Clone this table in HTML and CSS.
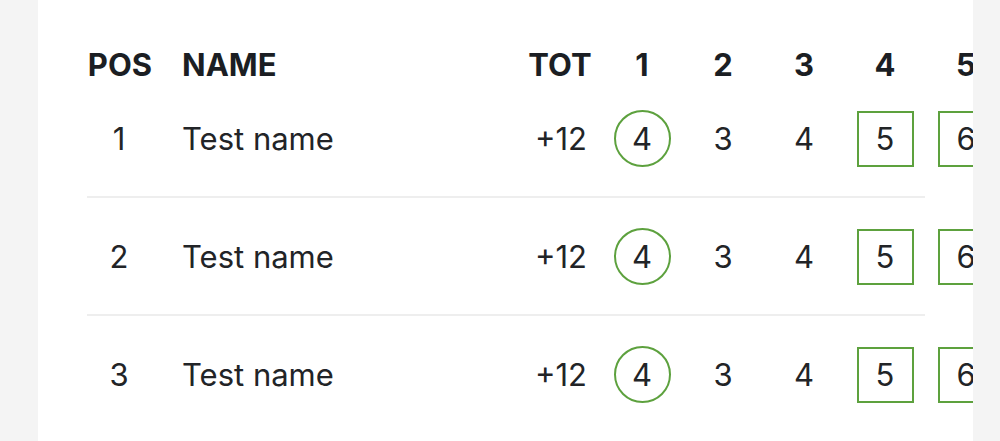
FILE: index.html
```html
<!DOCTYPE html>
<html>
<head>
<meta charset="utf-8">
<link rel="stylesheet" href="styles.css">
</head>
<body>
<div class="page">
  <div class="card">
    <div class="board">
      <div class="row head">
        <div class="c pos">POS</div>
        <div class="c name">NAME</div>
        <div class="c tot">TOT</div>
        <div class="c hole">1</div>
        <div class="c hole">2</div>
        <div class="c hole">3</div>
        <div class="c hole">4</div>
        <div class="c hole">5</div>
      </div>
      <div class="row player">
        <div class="c pos">1</div>
        <div class="c name">Test name</div>
        <div class="c tot">+12</div>
        <div class="c hole"><span class="score birdie">4</span></div>
        <div class="c hole"><span class="score">3</span></div>
        <div class="c hole"><span class="score">4</span></div>
        <div class="c hole"><span class="score bogey">5</span></div>
        <div class="c hole"><span class="score bogey">6</span></div>
      </div>
      <div class="row player">
        <div class="c pos">2</div>
        <div class="c name">Test name</div>
        <div class="c tot">+12</div>
        <div class="c hole"><span class="score birdie">4</span></div>
        <div class="c hole"><span class="score">3</span></div>
        <div class="c hole"><span class="score">4</span></div>
        <div class="c hole"><span class="score bogey">5</span></div>
        <div class="c hole"><span class="score bogey">6</span></div>
      </div>
      <div class="row player last">
        <div class="c pos">3</div>
        <div class="c name">Test name</div>
        <div class="c tot">+12</div>
        <div class="c hole"><span class="score birdie">4</span></div>
        <div class="c hole"><span class="score">3</span></div>
        <div class="c hole"><span class="score">4</span></div>
        <div class="c hole"><span class="score bogey">5</span></div>
        <div class="c hole"><span class="score bogey">6</span></div>
      </div>
    </div>
  </div>
</div>
</body>
</html>
```
FILE: styles.css
```css
html, body {
  margin: 0;
  padding: 0;
  background: #f4f4f4;
  height: 100%;
}
.page {
  display: flex;
  height: 441px;
}
.card {
  margin-left: 38px;
  width: 935px;
  height: 441px;
  background: #ffffff;
  overflow: hidden;
  font-family: Inter, "Noto Sans", sans-serif;
  color: #222427;
}
.board {
  padding-left: 49px;
  width: 920px;
}
.row {
  display: grid;
  grid-template-columns: 95px 338.5px repeat(6, 81px);
  align-items: center;
}
.head {
  padding-top: 46px;
  height: 34px;
  font-weight: 700;
  font-size: 31px;
  color: #1b1e23;
}
.player {
  height: 117px;
  font-size: 31px;
  font-weight: 400;
  position: relative;
}
.player::after {
  content: "";
  position: absolute;
  left: 0;
  bottom: -1px;
  width: 838px;
  height: 2px;
  background: #eeeeee;
}
.player.last::after {
  display: none;
}
.player + .player {
  margin-top: 1px;
}
.c {
  white-space: nowrap;
}
.pos {
  width: 66px;
  text-align: center;
}
.name {
  text-align: left;
}
.tot, .hole {
  text-align: center;
  display: flex;
  justify-content: center;
}
.head .tot {
  margin-left: -2px;
}
.player .pos {
  margin-left: -1px;
}
.score {
  display: flex;
  align-items: center;
  justify-content: center;
  width: 57px;
  height: 56px;
  box-sizing: border-box;
}
.birdie {
  border: 2px solid #5da13e;
  border-radius: 50%;
  height: 57px;
}
.bogey {
  border: 2px solid #5da13e;
}
```
